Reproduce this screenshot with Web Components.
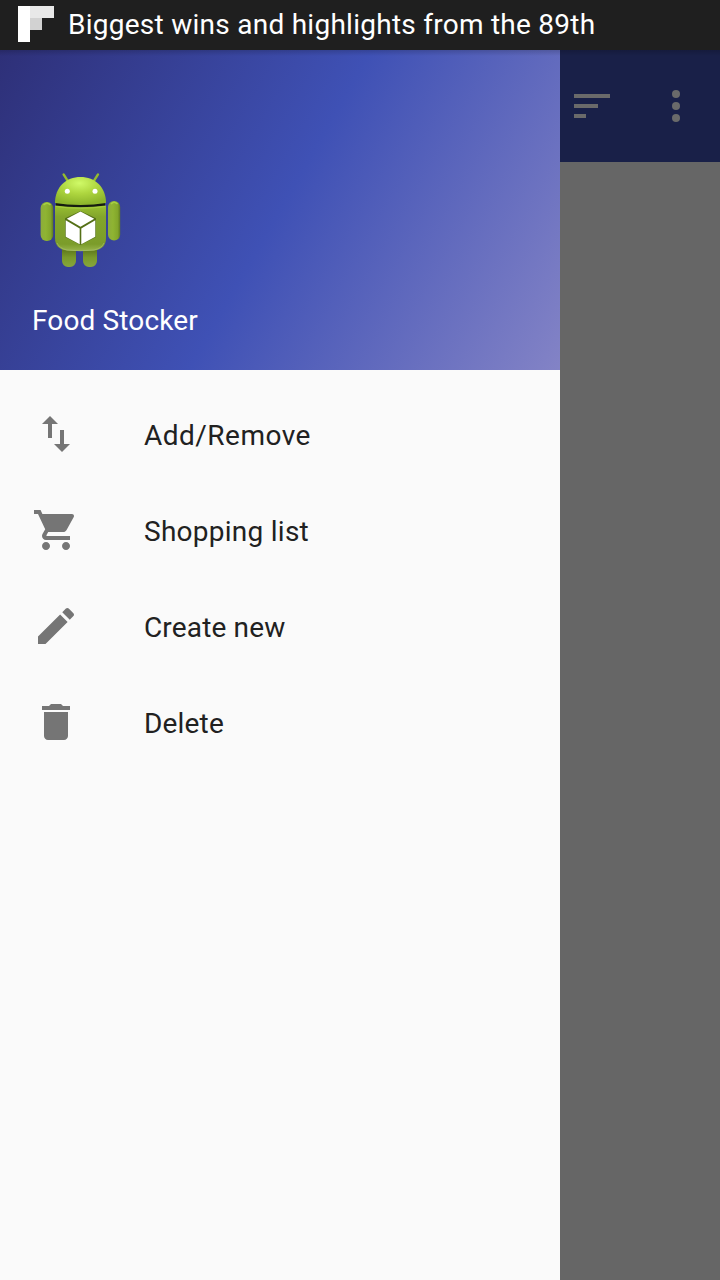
<!DOCTYPE html>
<html lang="en">
<head>
<meta charset="utf-8">
<title>Food Stocker</title>
<style>
html,body{margin:0;padding:0;height:100%;overflow:hidden;background:#666}
body{font-family:Roboto,"Liberation Sans",sans-serif}
</style>
</head>
<body>
<food-app></food-app>
<script>
const define = (name, html) => customElements.define(name, class extends HTMLElement {
  constructor() {
    super();
    const t = document.createElement('template');
    t.innerHTML = html;
    this.attachShadow({mode: 'open'}).append(t.content.cloneNode(true));
  }
});

define('ticker-bar', `
<style>
:host{display:flex;height:50px;background:#1f1f1f;color:#fff;padding-left:18px;gap:14px;box-sizing:border-box}
svg{display:block;margin-top:6px;flex:none}
span{font-size:28px;line-height:50px;white-space:nowrap;letter-spacing:var(--track,0)}
</style>
<svg width="36" height="36" shape-rendering="crispEdges"><path fill="#fff" d="M0 0h12v36H0z"/><path fill="#e8e8e8" d="M12 0h24v12H12z"/><path fill="#d2d2d2" d="M12 12h12v12H12z"/></svg>
<span><slot></slot></span>`);

define('robot-logo', `
<style>:host{display:block;width:96px;height:96px}svg{display:block}</style>
<svg width="96" height="110" viewBox="32 165 96 110">
<defs>
<radialGradient id="head" cx=".48" cy=".22" r=".75"><stop offset="0" stop-color="#d0fa68"/><stop offset=".5" stop-color="#aed63f"/><stop offset="1" stop-color="#8db52c"/></radialGradient>
<linearGradient id="body" x2="0" y2="1"><stop offset="0" stop-color="#98bf31"/><stop offset=".25" stop-color="#83a52b"/><stop offset=".85" stop-color="#7b9c2a"/><stop offset="1" stop-color="#98b54c"/></linearGradient>
<linearGradient id="limb"><stop offset="0" stop-color="#8cac3c"/><stop offset=".4" stop-color="#8fb432"/><stop offset=".8" stop-color="#82a52b"/><stop offset="1" stop-color="#5f7b20"/></linearGradient>
<linearGradient id="leg" x2="0" y2="1"><stop offset="0" stop-color="#587019"/><stop offset=".5" stop-color="#799a2a"/><stop offset="1" stop-color="#87a63c"/></linearGradient>
</defs>
<g stroke="#94bb2e" stroke-width="2.4" stroke-linecap="round"><path d="M63.6 174.4l4.4 7M98 174.4l-4.4 7"/></g>
<path fill="url(#leg)" d="M62 248h14v13a6 6 0 0 1-6 6h-2a6 6 0 0 1-6-6zM83 248h14v13a6 6 0 0 1-6 6h-2a6 6 0 0 1-6-6z"/>
<rect x="40.6" y="202" width="12.6" height="39" rx="6" fill="url(#limb)"/><rect x="108" y="201" width="12.2" height="39.4" rx="6" fill="url(#limb)"/>
<path d="M43.500 205q3.500-3.500 7 0M111 204q3-3.500 6.500 0" stroke="#a6cf42" stroke-width="1.400" fill="none"/>
<path fill="#151b10" d="M56 203h49v4H56z"/>
<path fill="url(#head)" d="M55 203C55 187 66 177 80.500 177S106 187 106 203Q94 205 80.500 205T55 203z"/>
<path fill="url(#body)" d="M55 205.500q25.500 3.500 51 0V238q0 11-12 12.500-13.500 1-27 0Q55 249 55 238z"/>
<path d="M55.500 206.500q25 3.500 50 0" fill="none" stroke="#a7ce3d"/>
<path d="M57 243q2 5 10 7 13.500 1.500 27 0 8-2 10-7" fill="none" stroke="#a5bc6b" opacity=".7"/>
<circle cx="67.300" cy="191.300" r="2.500" fill="#fff"/><circle cx="95" cy="191.300" r="2.500" fill="#fff"/>
<path fill="#557017" d="M80.500 211l15.500 7.300V237l-15.500 8-15.500-8v-18.700z"/>
<path fill="#fff" d="M80.500 211.600l13.700 7.200-13.700 8-13.700-8zM65.700 220.200l14 8.200V244.200l-14-7.500zM95.300 220.200l-14 8.200V244.200l14-7.500z"/>
</svg>`);

define('drawer-header', `
<style>
:host{display:flex;flex-direction:column;height:320px;box-sizing:border-box;padding:115px 32px 0;color:#fff;
background:linear-gradient(rgba(0,0,0,.16),transparent 6px),linear-gradient(119.74deg,#2e3078,#3f51b5 50%,#8383c6)}
span{font-size:28px;line-height:34px;margin-top:43px;white-space:nowrap;letter-spacing:var(--track,0)}
</style>
<robot-logo></robot-logo><span><slot></slot></span>`);

define('drawer-item', `
<style>
:host{display:flex;align-items:center;height:96px;padding-left:32px;gap:64px;color:#212121;font-size:28px;white-space:nowrap}
::slotted(svg){display:block;width:48px;height:48px;fill:#757575;flex:none}
span{letter-spacing:var(--track,0);line-height:34px;padding-top:4px}
</style>
<slot name="icon"></slot><span><slot></slot></span>`);

define('nav-drawer', `
<style>:host{display:block;width:560px;background:#fafafa}nav{padding-top:16px}</style>
<slot name="header"></slot><nav><slot></slot></nav>`);

define('app-toolbar', `
<style>
:host{display:flex;height:112px;background:linear-gradient(rgba(0,0,0,.16),transparent 6px),#192048;box-sizing:border-box;padding-left:14px}
svg{display:block}
</style>
<svg width="146" height="112" fill="#6a6a6a"><path shape-rendering="crispEdges" d="M0 44h36v4H0zM0 54h24v4H0zM0 64h12v4H0z"/><circle cx="102" cy="44" r="4"/><circle cx="102" cy="56" r="4"/><circle cx="102" cy="68" r="4"/></svg>`);

define('food-app', `
<style>
:host{display:flex;flex-direction:column;width:720px;height:1280px}
main{display:grid;grid-template-columns:560px 160px;flex:1}
</style>
<ticker-bar style="--track:.26px">Biggest wins and highlights from the 89th</ticker-bar>
<main>
<nav-drawer>
<drawer-header slot="header" style="--track:.13px">Food Stocker</drawer-header>
<drawer-item style="--track:.48px"><svg slot="icon" viewBox="0 0 24 24"><path d="M16 17.010V10h-2v7.010h-3L15 21l4-3.990h-3zM9 3L5 6.990h3V14h2V6.990h3L9 3z"/></svg>Add/Remove</drawer-item>
<drawer-item style="--track:.26px"><svg slot="icon" viewBox="0 0 24 24"><path d="M7 18c-1.100 0-1.990.9-1.990 2S5.900 22 7 22s2-.9 2-2-.9-2-2-2zM1 2v2h2l3.600 7.590-1.350 2.450c-.16.28-.25.61-.25.960 0 1.100.9 2 2 2h12v-2H7.420c-.14 0-.25-.11-.25-.25l.03-.12.9-1.630h7.450c.75 0 1.410-.41 1.750-1.030l3.580-6.490c.08-.14.12-.31.12-.48 0-.55-.45-1-1-1H5.210l-.94-2H1zm16 16c-1.100 0-1.990.9-1.990 2s.89 2 1.990 2 2-.9 2-2-.9-2-2-2z"/></svg>Shopping list</drawer-item>
<drawer-item style="--track:.15px"><svg slot="icon" viewBox="0 0 24 24"><path d="M3 17.250V21h3.750L17.810 9.940l-3.750-3.750L3 17.250zM20.710 7.040c.39-.39.39-1.020 0-1.410l-2.340-2.340c-.39-.39-1.020-.39-1.410 0l-1.830 1.830 3.750 3.750 1.830-1.830z"/></svg>Create new</drawer-item>
<drawer-item style="--track:.17px"><svg slot="icon" viewBox="0 0 24 24"><path d="M6 19c0 1.100.9 2 2 2h8c1.100 0 2-.9 2-2V7H6v12zM19 4h-3.500l-1-1h-5l-1 1H5v2h14V4z"/></svg>Delete</drawer-item>
</nav-drawer>
<app-toolbar></app-toolbar>
</main>`);
</script>
</body>
</html>
